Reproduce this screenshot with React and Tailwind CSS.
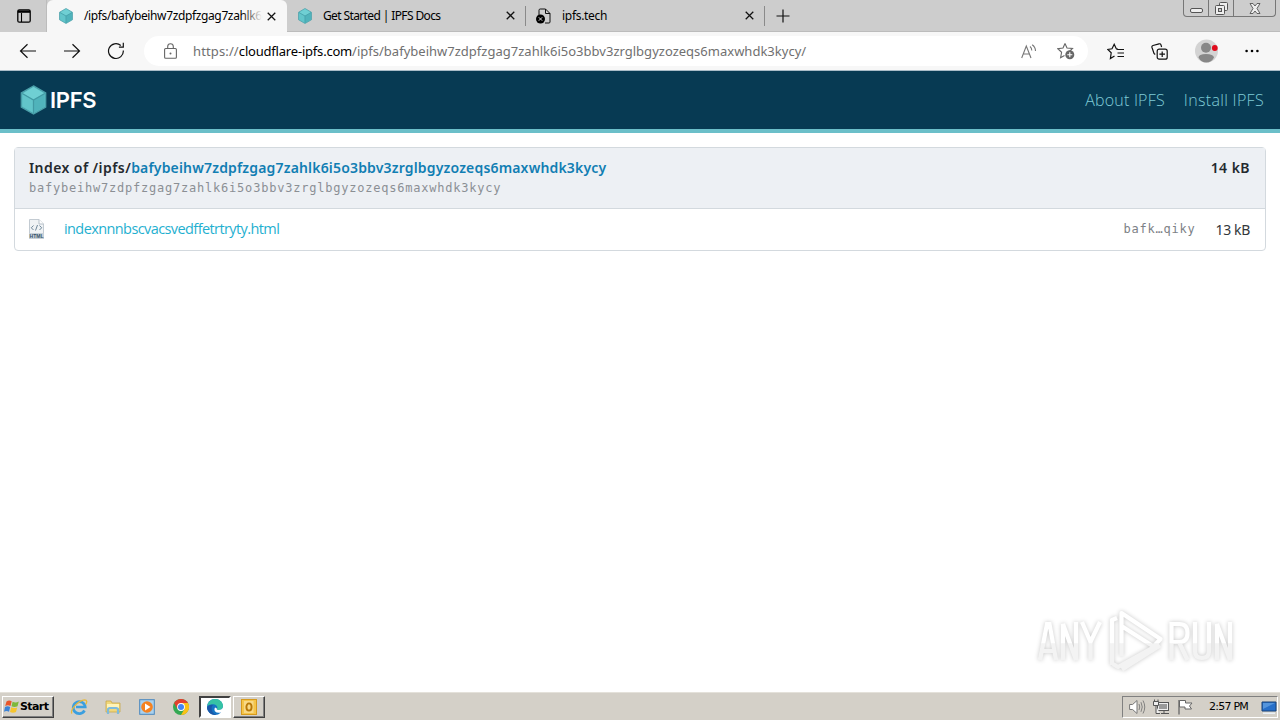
import React from "react";

const UI = "font-['Noto_Sans','Open_Sans',sans-serif]";

function Cube({ className }) {
  return (
    <svg viewBox="0 0 28 32" className={className}>
      <path d="M14 1 27 8.5v15L14 31 1 23.5v-15z" fill="#58b9c0" stroke="#4a9fa9" strokeWidth="1.4" />
      <path d="M14 2.2 25.5 9 14 15.5 2.5 9z" fill="#6fcfd3" />
      <path d="M2.3 9.6 13.4 16v13.4L2.3 23z" fill="#62c5ca" />
      <path d="M25.7 9.6 14.6 16v13.4L25.7 23z" fill="#50b3bb" />
      <path d="M2 9l12 7 12-7M14 16v14" fill="none" stroke="#429aa4" strokeWidth="1.3" />
    </svg>
  );
}

function Close() {
  return (
    <svg viewBox="0 0 10 10" className="h-[9px] w-[9px] shrink-0">
      <path d="M.8.8l8.4 8.4M9.2.8.8 9.2" stroke="#111" strokeWidth="1.4" fill="none" />
    </svg>
  );
}

function TabStrip() {
  return (
    <div className="flex h-8 items-start bg-[#cdcdcd]">
      <div className="flex h-8 w-[47px] items-center justify-center border-r border-[#bcbcbc]">
        <svg viewBox="0 0 14 14" className="ml-px h-[14px] w-[14px]">
          <rect x=".8" y=".8" width="12.4" height="12.4" rx="1.5" fill="none" stroke="#000" strokeWidth="1.3" />
          <path d="M1 1.400h12v2.400H1z" fill="#000" />
          <path d="M4.500 4v9" stroke="#000" strokeWidth="1.100" />
        </svg>
      </div>
      <div className="flex h-8 w-[240px] items-center rounded-t-md bg-[#f7f7f7] pl-[11px] pr-[11px]">
        <Cube className="h-4 w-4" />
        <div className="relative ml-[10px] w-[178px] whitespace-nowrap text-[12px] tracking-[-0.37px] text-black">
          /ipfs/bafybeihw7zdpfzgag7zahlk6
          <div className="absolute inset-y-0 right-0 w-5 bg-gradient-to-r from-[#f7f7f700] to-[#f7f7f7]" />
        </div>
        <div className="ml-auto"><Close /></div>
      </div>
      <div className="flex h-8 w-[238px] items-center border-b border-[#bcbcbc] pl-[10px] pr-[10px]">
        <Cube className="h-4 w-4" />
        <div className="ml-[10px] whitespace-nowrap text-[12px] tracking-[-0.62px] text-black">Get Started | IPFS Docs</div>
        <div className="ml-auto"><Close /></div>
      </div>
      <div className="flex h-8 w-[239px] items-center border-b border-[#bcbcbc]">
        <div className="h-5 w-px bg-[#8a8a8a]" />
        <svg viewBox="0 0 16 16" className="ml-[10px] h-4 w-4">
          <path d="M3 7V2.200C3 1.400 3.400 1 4.200 1H9.500L14 5.500V14c0 .7-.4 1-1 1H9M9.500 1v4.500H14" fill="none" stroke="#111" strokeWidth="1" />
          <circle cx="4.500" cy="11" r="4.500" fill="#000" />
          <path d="M2.800 9.300l3.400 3.400M6.200 9.300 2.800 12.700" stroke="#ddd" strokeWidth="1" />
        </svg>
        <div className="ml-[10px] text-[12px] tracking-[-0.3px] text-black">ipfs.tech</div>
        <div className="ml-auto mr-[10px]"><Close /></div>
      </div>
      <div className="flex h-8 flex-1 items-center border-b border-[#bcbcbc]">
        <div className="h-5 w-px bg-[#8a8a8a]" />
        <svg viewBox="0 0 14 14" className="ml-[11px] h-[14px] w-[14px]">
          <path d="M7 .5v13M.5 7h13" stroke="#111" strokeWidth="1.2" />
        </svg>
        <div className="ml-auto mr-1 flex h-[17px] w-[93px] self-start rounded-b border border-t-0 border-[#777]">
          <div className="flex w-[25px] items-center justify-center border-r border-[#777]">
            <svg viewBox="0 0 13 5" className="mt-[5px] h-[5px] w-[13px]"><rect x=".5" y=".5" width="12" height="4" rx="1.500" fill="#eee" stroke="#555" /></svg>
          </div>
          <div className="flex w-[25px] items-center justify-center border-r border-[#777]">
            <svg viewBox="0 0 13 13" className="h-[13px] w-[13px]">
              <rect x="4.500" y=".5" width="8" height="8" rx="1" fill="#eee" stroke="#555" />
              <rect x=".5" y="3.500" width="9" height="9" rx="1" fill="#eee" stroke="#555" />
              <rect x="3.500" y="6.500" width="3" height="3" fill="#ccc" stroke="#555" />
            </svg>
          </div>
          <div className="flex flex-1 items-center justify-center">
            <svg viewBox="0 0 12 11" className="h-[11px] w-3">
              <path d="M1 .5h3L6 3 8 .5h3L8 5.500l3 5H8L6 8l-2 2.500H1l3-5z" fill="#eee" stroke="#555" strokeWidth=".9" />
            </svg>
          </div>
        </div>
      </div>
    </div>
  );
}

function Toolbar() {
  return (
    <div className="flex h-[39px] items-center border-b border-[#a9bcc8] bg-[#f7f7f7]">
      <svg viewBox="0 0 18 16" className="ml-[19px] h-4 w-[18px]"><path d="M8.500 1.200 1.500 8l7 6.800M1.500 8H17" fill="none" stroke="#111" strokeWidth="1.2" /></svg>
      <svg viewBox="0 0 18 16" className="ml-[26px] h-4 w-[18px]"><path d="M9.500 1.200 16.500 8l-7 6.800M16.500 8H1" fill="none" stroke="#111" strokeWidth="1.2" /></svg>
      <svg viewBox="0 0 18 18" className="ml-[26px] h-[18px] w-[18px]">
        <path d="M16.300 8.500a7.400 7.400 0 1 1-2.500-5M16.300.8v4.400h-4.400" fill="none" stroke="#111" strokeWidth="1.200" />
      </svg>
      <div className="ml-[19px] flex h-[30px] w-[944px] items-center rounded-full bg-white pl-5 pr-[13px]">
        <svg viewBox="0 0 13 16" className="h-4 w-[13px]">
          <rect x=".6" y="5.500" width="11.800" height="9.800" rx="1" fill="none" stroke="#666" strokeWidth="1.100" />
          <path d="M3.700 5.500V3.500a2.800 2.800 0 0 1 5.600 0v2" fill="none" stroke="#666" strokeWidth="1.100" />
          <circle cx="6.500" cy="10.400" r="1" fill="#666" />
        </svg>
        <div className="ml-4 mt-px whitespace-nowrap text-[13px] tracking-[0.13px] text-[#707070]">
          https://<span className="tracking-[-0.2px] text-black">cloudflare-ipfs.com</span><span className="tracking-[0.01px]">/ipfs/bafybeihw7zdpfzgag7zahlk6i5o3bbv3zrglbgyzozeqs6maxwhdk3kycy/</span>
        </div>
        <svg viewBox="0 0 16 15" className="ml-auto h-[15px] w-4">
          <path d="M.7 14 5.300 2 10 14M2.300 10h6M9 2.500q1.800 1.500 1.800 4M11.200.7q3.300 2.300 3.300 6.300" fill="none" stroke="#777" strokeWidth="1.100" />
        </svg>
        <svg viewBox="0 0 18 18" className="ml-5 h-[18px] w-[18px]">
          <path d="M8 1.500 10 6l5.500.5-3 2.800M8 1.500 6 6 .8 6.700l3.800 3.600-1 5.400L7.500 13.500" fill="none" stroke="#666" strokeWidth="1.100" />
          <circle cx="12.800" cy="12.800" r="4.500" fill="#666" />
          <path d="M12.800 10.300v5M10.300 12.800h5" stroke="#fff" strokeWidth="1.100" />
        </svg>
      </div>
      <svg viewBox="0 0 18 17" className="ml-[19px] h-[17px] w-[18px]">
        <path d="M11 6 9.300 5.800 7.200 1.300 5 5.800.8 6.500 4.200 9.800 3.400 15.500 7.500 13M9.500 6.500H17M10.500 10h6.500M10.500 13.500h6.500" fill="none" stroke="#111" strokeWidth="1.200" />
      </svg>
      <svg viewBox="0 0 17 17" className="ml-[26px] h-[17px] w-[17px]">
        <rect x="6.200" y="6.200" width="10" height="10" rx="2" fill="none" stroke="#111" strokeWidth="1.200" />
        <path d="M11.200 8.400v5.600M8.400 11.200H14" stroke="#111" strokeWidth="1.200" />
        <path d="M4.200 11.500 3 10.500 1 4.500C.7 3.500 1 2.800 2 2.500L8 .8c1-.2 1.700 0 2 1L10.600 4" fill="none" stroke="#111" strokeWidth="1.200" />
      </svg>
      <svg viewBox="0 0 24 24" className="ml-[27px] h-6 w-6">
        <circle cx="11.500" cy="12" r="11.500" fill="#d3d3d3" />
        <circle cx="11" cy="8.800" r="5" fill="#878787" />
        <path d="M3.500 18.500q0-3.500 7.500-3.500t8 3.500q-2.500 5-7.700 5t-7.800-5z" fill="#878787" />
        <circle cx="19.800" cy="9" r="2.900" fill="#e00b1c" />
      </svg>
      <svg viewBox="0 0 14 4" className="ml-[26px] h-1 w-[14px]">
        <circle cx="1.600" cy="2" r="1.300" /><circle cx="7" cy="2" r="1.300" /><circle cx="12.400" cy="2" r="1.300" />
      </svg>
    </div>
  );
}

function Watermark() {
  return (
    <svg viewBox="0 0 210 70" className="absolute left-[1030px] top-[606px] h-[70px] w-[210px] drop-shadow-[0_0_2px_#00000038]">
      <defs>
        <linearGradient id="sheen" gradientUnits="userSpaceOnUse" x1="0" y1="8" x2="0" y2="62">
          <stop offset="0.53" stopColor="#ffffff" />
          <stop offset="0.55" stopColor="#f3f3f3" />
        </linearGradient>
      </defs>
      <g fill="none" stroke="url(#sheen)" strokeWidth="4.200">
        <path d="M10 54 17 18h2.500L26 54M12.500 45h11M33 54V18L46 54V16M52 16l8.500 20L70 16M60.500 35v19" />
        <path d="M141.500 54V18h8q8 0 8 9t-8 9h-8M149 36l8.500 18M165 16v29q0 7 7 7t7-7V16M187 54V18l13 36V16" />
        <path d="M82 59V14l5-2M91.500 50V7l39 26-7 7.500L91.500 20M83 58l5 3 36-20M92 63.500l38-24" strokeLinejoin="round" />
      </g>
    </svg>
  );
}

function Taskbar() {
  return (
    <div className="flex h-7 items-center border-t border-[#e4e1da] bg-[#d4d0c8] pl-0.5 font-['DejaVu_Sans',sans-serif]">
      <div className="flex h-[22px] w-[52px] items-center border border-b-[#404040] border-l-white border-r-[#404040] border-t-white pl-px shadow-[inset_-1px_-1px_0_#808080]">
        <svg viewBox="0 0 16 15" className="h-[15px] w-4 shrink-0">
          <path d="M2.500 2.500Q5 .8 7.700 2.300L6.500 7Q4 5.500 1.200 7z" fill="#e9562a" />
          <path d="M8.600 2.800q3 1.500 6.200-.2L13.500 7.300q-3 1.500-6 0z" fill="#7db83a" />
          <path d="M1 8q2.500-1.500 5.200 0L5 12.700q-2.500-1.500-5 0z" fill="#3c83d6" />
          <path d="M7.200 8.300q3 1.500 6 .2L12 13q-3 1.500-6 0z" fill="#f6c52e" />
        </svg>
        <span className="mt-0.5 text-[11px] font-bold tracking-[-0.6px] text-black">Start</span>
      </div>
      <svg viewBox="0 0 18 18" className="ml-4 h-[18px] w-[18px]">
        <path d="M14.500 12.500A6 6 0 1 1 15.200 9H6" fill="none" stroke="#3b9fdf" strokeWidth="2.700" />
        <path d="M2 15.500C-.5 12 9 2 14.500 1.800c3 0 2.500 2.700 1.200 4.500" fill="none" stroke="#e8b93b" strokeWidth="1.300" />
      </svg>
      <svg viewBox="0 0 18 18" className="ml-4 h-[18px] w-[18px]">
        <path d="M2 3h5l1 2h8v9H2z" fill="#f0d77b" stroke="#c9a74a" strokeWidth=".8" />
        <path d="M3 6h12v4H3z" fill="#fff3b8" />
        <path d="M4 16v-4q0-2 2-2h6q2 0 2 2v4" fill="none" stroke="#7dbbdd" strokeWidth="2.200" />
      </svg>
      <svg viewBox="0 0 16 16" className="ml-[17px] h-4 w-4">
        <rect x=".7" y=".7" width="14.600" height="14.600" fill="#a9d1ee" stroke="#4a87bd" />
        <circle cx="8" cy="8" r="5.800" fill="#f58220" /><path d="M6 4.500 11.500 8 6 11.500z" fill="#fff" />
      </svg>
      <svg viewBox="0 0 16 16" className="ml-[18px] h-4 w-4">
        <circle cx="8" cy="8" r="8" fill="#34a853" />
        <path d="M1.100 4A8 8 0 0 1 15 4H8L4.500 10z" fill="#e3402f" />
        <path d="M15 4A8 8 0 0 1 8 16l3.500-6L8 4z" fill="#fbc116" />
        <circle cx="8" cy="8" r="3.900" fill="#fff" /><circle cx="8" cy="8" r="3" fill="#4285f4" />
      </svg>
      <div className="ml-[10px] flex h-[22px] w-8 items-center justify-center border-2 border-b-white border-l-[#404040] border-r-white border-t-[#404040] bg-white">
        <svg viewBox="0 0 16 16" className="h-4 w-4">
          <circle cx="8" cy="8" r="8" fill="#1574c4" />
          <path d="M.2 7.200C1 2.800 4 0 8 0c5 0 8 3.500 8 7 0 2.500-2 4-4.300 4-1.200 0-2.200-.5-1.500-1.500C11 7.500 9 5.200 6 5.200 3.500 5.200 1.200 6 .2 7.200z" fill="#36c3a5" />
          <path d="M9.800 9.200c-.6 1 .5 1.800 2 1.800 2.200 0 3.700-1 4.300-3v6l-2-.6q-4 1-6.200-1.200Q7 10.500 8 8.500z" fill="#fff" />
          <path d="M6 6c-2.500 2-2 8 3.500 9.800C5 16.800 0 13 0 8.500 1 6.500 3.500 5.500 6 6z" fill="#1b58a8" />
        </svg>
      </div>
      <div className="ml-0.5 flex h-[22px] w-8 items-center justify-center border border-b-[#404040] border-l-white border-r-[#404040] border-t-white shadow-[inset_-1px_-1px_0_#808080]">
        <svg viewBox="0 0 16 16" className="h-4 w-4">
          <rect x=".5" y=".5" width="15" height="15" fill="#f5c449" stroke="#d69a1d" />
          <rect x="3" y="2" width="9.500" height="12" fill="#f8d987" />
          <ellipse cx="8" cy="8" rx="2.600" ry="3.600" fill="none" stroke="#b87808" strokeWidth="1.900" />
        </svg>
      </div>
      <div className="ml-auto mr-0.5 flex h-[22px] w-[156px] items-center border border-b-white border-l-[#808080] border-r-white border-t-[#808080] pl-[6px]">
        <svg viewBox="0 0 17 16" className="h-4 w-[17px]">
          <path d="M.6 5.500h3L8 1.500v13L3.600 10.500h-3z" fill="#fff" stroke="#777" />
          <path d="M10 5q1.500 3 0 6M12 3.200q2.500 4.800 0 9.600M14 1.500q3.500 6.500 0 13" fill="none" stroke="#777" strokeWidth=".9" />
        </svg>
        <svg viewBox="0 0 17 16" className="ml-[7px] h-4 w-[17px]">
          <rect x="4.500" y="3.500" width="11" height="8" fill="#eee" stroke="#555" />
          <path d="M6 5h8v5H6z" fill="#999" /><path d="M8 14.500h8M11 12v2M1.500.5v3M5 .5v3" stroke="#555" />
          <path d="M.5 2.500h5v4h-5zM3 7v7.500h4" fill="#eee" stroke="#555" />
        </svg>
        <svg viewBox="0 0 17 16" className="ml-[7px] h-4 w-[17px]">
          <path d="M2 15.500V1" stroke="#666" strokeWidth="1.300" />
          <path d="M2.500 1.500h6v2.500h6.500L12.500 7l2 3H8V8H2.500z" fill="#fff" stroke="#666" />
        </svg>
        <span className="ml-[15px] mt-0.5 whitespace-nowrap text-[11px] tracking-[-0.75px] text-black">2:57 PM</span>
        <svg viewBox="0 0 16 14" className="ml-auto mt-0.5 h-[14px] w-4">
          <path d="M1 1h14v9H1z" fill="#276fc9" stroke="#184279" /><path d="M2 2h12L2 8z" fill="#5595dc" /><path d="M2 11.500h12V13H2z" fill="#e9f0f6" />
        </svg>
      </div>
    </div>
  );
}

export default function App() {
  return (
    <div className={`relative flex h-[720px] w-[1280px] flex-col overflow-hidden bg-white ${UI}`}>
      <TabStrip />
      <Toolbar />
      <header className="flex h-[62px] shrink-0 items-center border-b-4 border-[#6bbfc9] bg-[#073a53] pl-5 pr-4">
        <Cube className="h-[30px] w-[27px]" />
        <span className="ml-[3px] mt-px font-[Inter,sans-serif] text-[22px] font-semibold tracking-[-0.3px] text-white">IPFS</span>
        <nav className="ml-auto flex gap-[19px] whitespace-nowrap font-['Open_Sans',sans-serif] text-[16px] font-light text-[#7fcbd6]">
          <span className="tracking-[0.2px]">About IPFS</span>
          <span className="tracking-[0.32px]">Install IPFS</span>
        </nav>
      </header>
      <main className="flex-1 px-[14px] pt-[14px]">
        <section className="rounded border border-[#d3d9de]">
          <div className="flex h-[61px] justify-between border-b border-[#d3d9de] bg-[#edf0f4] pl-[14px] pr-[15px] pt-[10px]">
            <div>
              <div className="whitespace-nowrap text-[14px] font-semibold leading-5 tracking-[0.43px] text-[#24292e]">
                Index of /ipfs/<span className="tracking-[0.17px] text-[#117eb3]">bafybeihw7zdpfzgag7zahlk6i5o3bbv3zrglbgyzozeqs6maxwhdk3kycy</span>
              </div>
              <div className="whitespace-nowrap font-['DejaVu_Sans_Mono',monospace] text-[12px] leading-5 tracking-[0.78px] text-[#8b8f94]">
                bafybeihw7zdpfzgag7zahlk6i5o3bbv3zrglbgyzozeqs6maxwhdk3kycy
              </div>
            </div>
            <div className="text-[14px] font-semibold leading-5 tracking-[0.45px] text-[#24292e]">14 kB</div>
          </div>
          <div className="flex h-[41px] items-center pb-px pl-[14px] pr-[15px]">
            <svg viewBox="0 0 15 20" className="h-5 w-[15px]">
              <path d="M.5.5H10L14.500 5v14.500H.5z" fill="#f0f3f5" stroke="#c3cbd2" /><path d="M10 .5V5h4.500" fill="#fff" stroke="#b6c0c9" />
              <path d="M4.500 6.500 2.300 8.800l2.200 2.200M10.500 6.500l2.200 2.300-2.200 2.200M8.500 6l-2 5.500" fill="none" stroke="#6f8799" />
              <path d="M0 14h15v6H0z" fill="#c8d1d9" />
              <text x="7.500" y="18.900" textAnchor="middle" fontSize="5" fontWeight="bold" fontFamily="Liberation Sans, sans-serif" fill="#35536b">HTML</text>
            </svg>
            <span className="ml-5 font-['Open_Sans',sans-serif] text-[14.5px] font-normal tracking-[-0.59px] text-[#1fb0d0]">indexnnnbscvacsvedffetrtryty.html</span>
            <span className="ml-auto font-['DejaVu_Sans_Mono',monospace] text-[12px] tracking-[0.78px] text-[#7d8186]">bafk…qiky</span>
            <span className="ml-5 text-[14px] tracking-[-0.35px] text-[#33373b]">13 kB</span>
          </div>
        </section>
      </main>
      <Watermark />
      <Taskbar />
    </div>
  );
}
